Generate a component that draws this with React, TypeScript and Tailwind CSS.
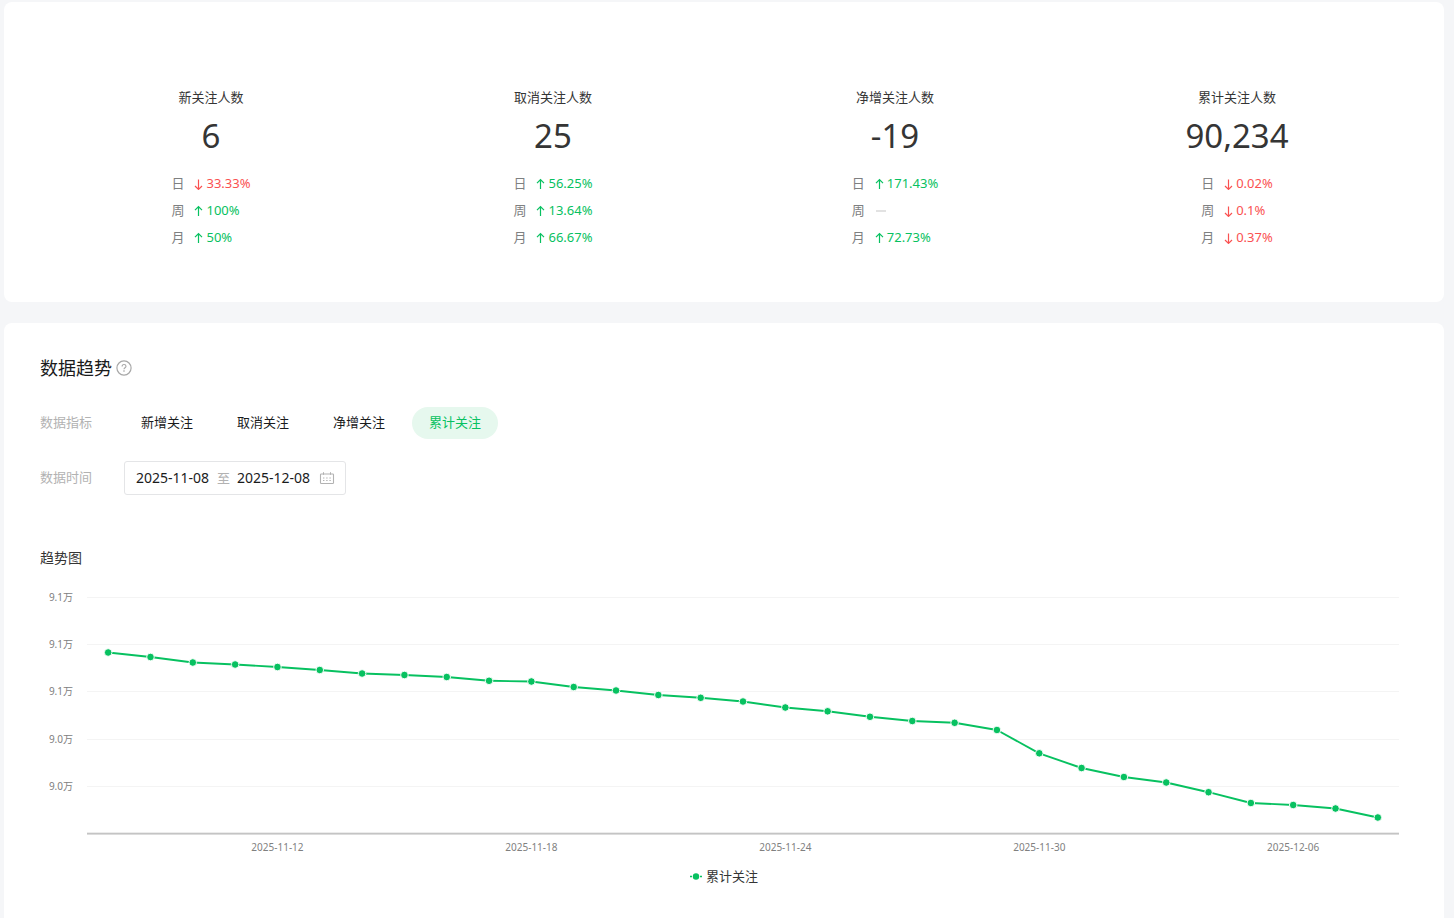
import { useState } from "react";

type Trend = "up" | "down" | "flat";

interface Change {
  period: string;
  trend: Trend;
  value?: string;
}

interface Stat {
  title: string;
  value: string;
  changes: Change[];
}

const stats: Stat[] = [
  {
    title: "新关注人数",
    value: "6",
    changes: [
      { period: "日", trend: "down", value: "33.33%" },
      { period: "周", trend: "up", value: "100%" },
      { period: "月", trend: "up", value: "50%" },
    ],
  },
  {
    title: "取消关注人数",
    value: "25",
    changes: [
      { period: "日", trend: "up", value: "56.25%" },
      { period: "周", trend: "up", value: "13.64%" },
      { period: "月", trend: "up", value: "66.67%" },
    ],
  },
  {
    title: "净增关注人数",
    value: "-19",
    changes: [
      { period: "日", trend: "up", value: "171.43%" },
      { period: "周", trend: "flat" },
      { period: "月", trend: "up", value: "72.73%" },
    ],
  },
  {
    title: "累计关注人数",
    value: "90,234",
    changes: [
      { period: "日", trend: "down", value: "0.02%" },
      { period: "周", trend: "down", value: "0.1%" },
      { period: "月", trend: "down", value: "0.37%" },
    ],
  },
];

const metrics = ["新增关注", "取消关注", "净增关注", "累计关注"];

const points = [
  62.5, 67, 72.5, 74.5, 77, 80, 83.5, 85, 87, 90.8, 91.5, 97, 100.5, 105, 107.8,
  111.5, 117.5, 121.3, 126.8, 131, 132.8, 140, 163.3, 178, 187, 192.5, 202.2,
  213, 215, 218.5, 227.5,
];

const gridLines = [
  { y: 7, label: "9.1万" },
  { y: 54, label: "9.1万" },
  { y: 101, label: "9.1万" },
  { y: 149, label: "9.0万" },
  { y: 196, label: "9.0万" },
];

const dateTicks = [
  { index: 4, label: "2025-11-12" },
  { index: 10, label: "2025-11-18" },
  { index: 16, label: "2025-11-24" },
  { index: 22, label: "2025-11-30" },
  { index: 28, label: "2025-12-06" },
];

const xAt = (index: number) => `${((index + 0.5) / points.length) * 100}%`;

function Arrow({ down }: { down?: boolean }) {
  return (
    <svg
      width="9"
      height="12"
      viewBox="0 0 9 12"
      fill="none"
      stroke="currentColor"
      strokeWidth="1.2"
      aria-hidden="true"
    >
      <path d={down ? "M4.5 1.5v9.5M1 8l3.5 3.4L8 8" : "M4.5 11v-9.3M1 5.2l3.5-3.5L8 5.2"} />
    </svg>
  );
}

function ChangeRow({ period, trend, value }: Change) {
  return (
    <li className="flex h-[27px] items-center">
      <span className="w-[23px] text-[#7e8081]">{period}</span>
      {trend === "flat" ? (
        <span className="ml-px h-[2px] w-[10px] bg-[#e2e2e2]" />
      ) : (
        <span
          className={
            trend === "up"
              ? "flex items-center gap-[3px] text-[#07c160]"
              : "flex items-center gap-[3px] text-[#fa5151]"
          }
        >
          <Arrow down={trend === "down"} />
          {value}
        </span>
      )}
    </li>
  );
}

function StatColumn({ title, value, changes }: Stat) {
  return (
    <div className="flex flex-col items-center">
      <h3 className="leading-5 text-[#353535]">{title}</h3>
      <p className="mt-1 text-[33px] leading-[50px] text-[#353535]">{value}</p>
      <ul className="mt-[9px]">
        {changes.map((c) => (
          <ChangeRow key={c.period} {...c} />
        ))}
      </ul>
    </div>
  );
}

function TrendChart() {
  return (
    <div className="flex">
      <svg className="h-[275px] w-[47px] shrink-0" aria-hidden="true">
        {gridLines.map((g) => (
          <text key={g.y} x="33" y={g.y + 4} textAnchor="end" fontSize="10" fill="#808080">
            {g.label}
          </text>
        ))}
      </svg>
      <svg className="h-[275px] min-w-0 flex-1 overflow-visible" role="img" aria-label="趋势图">
        {gridLines.map((g) => (
          <rect key={g.y} x="0" y={g.y} width="100%" height="1" fill="#f4f4f4" />
        ))}
        <rect x="0" y="242" width="100%" height="1" fill="#ececec" />
        <rect x="0" y="243" width="100%" height="1" fill="#c4c4c4" />
        <rect x="0" y="244" width="100%" height="1" fill="#dcdcdc" />
        {points.slice(1).map((y, i) => (
          <line
            key={i}
            x1={xAt(i)}
            y1={points[i]}
            x2={xAt(i + 1)}
            y2={y}
            stroke="#07c160"
            strokeWidth="1.9"
          />
        ))}
        {points.map((y, i) => (
          <circle key={i} cx={xAt(i)} cy={y} r="3.8" fill="#07c160" stroke="#ffffff" strokeWidth="0.9" />
        ))}
        {dateTicks.map((t) => (
          <text key={t.index} x={xAt(t.index)} y="261" textAnchor="middle" fontSize="10" fill="#808080">
            {t.label}
          </text>
        ))}
      </svg>
    </div>
  );
}

export default function App() {
  const [metric, setMetric] = useState("累计关注");
  const [start, setStart] = useState("2025-11-08");
  const [end, setEnd] = useState("2025-12-08");

  return (
    <main className="flex min-h-screen flex-col gap-[21px] bg-[#f5f6f8] pt-[2px] pr-[10px] pl-1 font-['Noto_Sans','Noto_Sans_CJK_SC',sans-serif] text-[13px] text-[#1a1b1c]">
      <section className="rounded-lg bg-white px-9 pt-[85px] pb-[51px]">
        <div className="grid grid-cols-4">
          {stats.map((s) => (
            <StatColumn key={s.title} {...s} />
          ))}
        </div>
      </section>

      <section className="flex-1 rounded-t-lg bg-white px-9 pt-8 pb-7">
        <div className="flex items-center gap-1">
          <h2 className="text-lg leading-[26px]">数据趋势</h2>
          <button type="button" aria-label="说明" className="text-[#a8a8a8]">
            <svg width="16" height="16" viewBox="0 0 16 16" fill="none" stroke="currentColor">
              <circle cx="8" cy="8" r="7.1" strokeWidth="1.2" />
              <path d="M6.1 6.5C6.1 5.2 6.9 4.5 8 4.5s2 .8 2 1.8c0 1.4-2 1.5-2 3" strokeWidth="1.1" />
              <path d="M8 10.3v1.4" strokeWidth="1.3" />
            </svg>
          </button>
        </div>

        <div className="mt-[26px] flex items-center">
          <span className="w-[84px] text-[#b2b2b2]">数据指标</span>
          <div className="flex gap-[10px]">
            {metrics.map((m) => (
              <button
                key={m}
                type="button"
                aria-pressed={m === metric}
                onClick={() => setMetric(m)}
                className={
                  m === metric
                    ? "h-8 rounded-full bg-[#e6f8ee] px-[17px] text-[#07c160]"
                    : "h-8 rounded-full px-[17px]"
                }
              >
                {m}
              </button>
            ))}
          </div>
        </div>

        <div className="mt-[22px] flex items-center">
          <label htmlFor="start-date" className="w-[84px] text-[#b2b2b2]">
            数据时间
          </label>
          <div className="flex h-[34px] items-center rounded-[3px] border border-[#e4e5e7] px-[10px] text-sm">
            <input
              id="start-date"
              value={start}
              onChange={(e) => setStart(e.target.value)}
              className="w-[76px] pl-px outline-none"
            />
            <span className="mx-[6px] text-[13px] text-[#b2b2b2]">至</span>
            <input
              aria-label="结束日期"
              value={end}
              onChange={(e) => setEnd(e.target.value)}
              className="w-[76px] pl-px outline-none"
            />
            <button type="button" aria-label="选择日期" className="ml-[7px] text-[#b2b2b2]">
              <svg width="16" height="14" viewBox="0 0 16 14" fill="none" stroke="currentColor">
                <rect x="1.5" y="3" width="13" height="9.5" rx="0.8" strokeWidth="1.1" />
                <path d="M4.5 1.2v2.6M11.5 1.2v2.6" />
                <path d="M4 7h8M4 9.5h8" strokeDasharray="1.4 1.8" />
              </svg>
            </button>
          </div>
        </div>

        <h3 className="mt-[53px] text-sm leading-5 text-[#353535]">趋势图</h3>
        <div className="mt-[22px] pr-[9px]">
          <TrendChart />
        </div>
        <div className="mt-px flex items-center justify-center gap-1 text-[#353535]">
          <svg width="12" height="8" viewBox="0 0 12 8" aria-hidden="true">
            <path d="M0 4.5h2M10 4.5h2" stroke="#07c160" strokeWidth="1.7" />
            <circle cx="6" cy="4.5" r="3.2" fill="#07c160" />
          </svg>
          <span className="leading-5">累计关注</span>
        </div>
      </section>
    </main>
  );
}
